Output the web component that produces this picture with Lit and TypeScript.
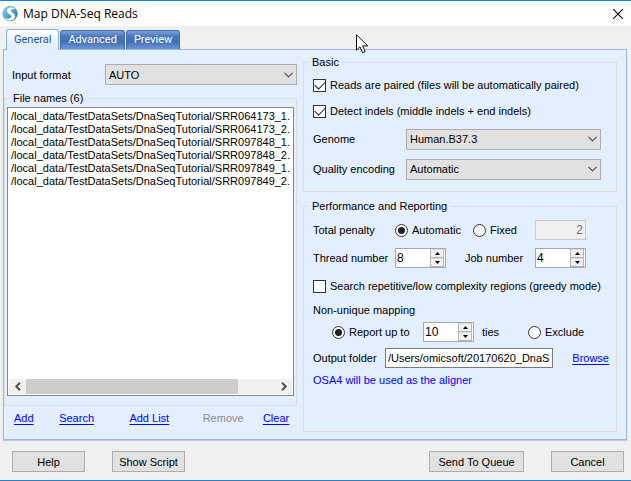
import { LitElement, html, css, svg } from "lit";
import { customElement, property } from "lit/decorators.js";

const base = css`
  * { box-sizing: border-box; }
  input, select, button {
    font: inherit;
    color: inherit;
    margin: 0;
    border-radius: 0;
  }
`;

@customElement("combo-box")
class ComboBox extends LitElement {
  @property() label = "";
  @property() value = "";
  static styles = [base, css`
    :host { display: grid; grid-template-columns: minmax(0, 1fr); height: 21px; }
    .select, .chevron { grid-area: 1 / 1; }
    .select {
      appearance: none;
      width: 100%;
      height: 21px;
      padding: 0 20px 0 3px;
      border: 1px solid #adadad;
      background: #e1e1e1;
    }
    .chevron {
      justify-self: end;
      align-self: center;
      margin-right: 4px;
      pointer-events: none;
    }
  `];
  render() {
    return html`
      <select class="select" aria-label=${this.label}><option>${this.value}</option></select>
      <svg class="chevron" width="9" height="6" viewBox="0 0 9 6" fill="none" stroke="#505050" stroke-width="1.2">
        <path d="M.5 .8 4.5 4.8 8.5 .8" />
      </svg>`;
  }
}

@customElement("number-spinner")
class NumberSpinner extends LitElement {
  @property() label = "";
  @property() value = "";
  static styles = [base, css`
    :host {
      display: flex;
      flex: none;
      box-sizing: border-box;
      width: 51px;
      height: 20px;
      border: 1px solid #a4a7ab;
      background: #fff;
      padding-right: 1px;
    }
    .field {
      flex: 1;
      min-width: 0;
      border: 0;
      padding: 0 0 1px 1px;
      background: none;
      font-size: 12px;
    }
    .buttons { display: grid; grid-template-rows: 1fr 1fr; width: 14px; }
    .step {
      display: grid;
      place-items: center;
      padding: 0;
      border: 1px solid #b4b4b4;
      border-top-color: #d8d8d8;
      background: #f0f0f0;
    }
  `];
  render() {
    return html`
      <input class="field" aria-label=${this.label} .value=${this.value} />
      <span class="buttons">
        <button class="step" aria-label="Increase"><svg width="5" height="3" viewBox="0 0 5 3"><path d="M0 3 2.5 0 5 3z" /></svg></button>
        <button class="step" aria-label="Decrease"><svg width="5" height="3" viewBox="0 0 5 3"><path d="M0 0 2.5 3 5 0z" /></svg></button>
      </span>`;
  }
}

const FILES = ["SRR064173_1", "SRR064173_2", "SRR097848_1", "SRR097848_2", "SRR097849_1", "SRR097849_2"]
  .map((name) => `/local_data/TestDataSets/DnaSeqTutorial/${name}.`);

const arrow = (d: string) => svg`<path d=${d} fill="none" stroke="#505050" stroke-width="2" />`;

@customElement("app-root")
class AppRoot extends LitElement {
  static styles = [base, css`
    :host {
      position: relative;
      display: flex;
      flex-direction: column;
      min-height: 100vh;
      box-sizing: border-box;
      border-top: 1px solid #1883d7;
      border-bottom: 1px solid #1883d7;
      background: #f0f0f0;
      color: #000;
      font: 11px/14px "Liberation Sans", Arial, sans-serif;
    }
    .titlebar {
      display: flex;
      align-items: center;
      height: 25px;
      padding: 0 8px 0 2px;
      background: #fff;
    }
    .logo { margin-right: 5px; }
    .title {
      flex: 1;
      margin: 0;
      font: 12px/16px "Open Sans", "Noto Sans", sans-serif;
    }
    .close { display: grid; padding: 0; border: 0; background: none; }

    .tabs { display: flex; align-items: flex-end; gap: 1px; height: 23px; padding-left: 6px; }
    .tab {
      height: 19px;
      padding: 0 7px 1px;
      border: 1px solid #3c6bb4;
      border-bottom: 0;
      border-radius: 3px 3px 0 0;
      background: linear-gradient(#7ba0d8, #4a78be 30%, #426fb5 60%, #6c98d8);
      color: #fff;
      font: 11px/16px Roboto, "Liberation Sans", sans-serif;
    }
    .tab.selected {
      z-index: 1;
      height: 21px;
      margin-bottom: -1px;
      border-color: #8db2e3;
      background: linear-gradient(#fff, #e3eeff 70%);
      color: #2a57a5;
    }

    .panel {
      flex: 1;
      display: grid;
      grid-template-columns: minmax(0, 293fr) minmax(0, 314fr);
      column-gap: 6px;
      margin: 0 4px 0 3px;
      padding: 0 9px 7px 0;
      border: 1px solid #99b8e8;
      background: #e3eeff;
      box-shadow: 0 1px 1px #c4ccd8;
    }
    .left { display: flex; flex-direction: column; padding-top: 14px; }
    .right { display: flex; flex-direction: column; gap: 7px; padding-top: 5px; }

    .group { min-width: 0; margin: 0; padding: 0 7px 0 9px; border: 1px solid #dcdcdc; }
    .caption { padding: 0 3px; margin-left: -4px; }
    .basic { padding: 3px 7px 7px 9px; }
    .basic .row { padding-right: 8px; }
    .files {
      flex: 1;
      display: flex;
      flex-direction: column;
      margin-top: 6px;
      padding: 2px 2px 9px;
    }
    .files .caption { margin-left: 3px; }
    .report { flex: 1; padding-top: 2px; }

    .row { display: flex; align-items: center; min-height: 30px; }
    .row.tight { min-height: 26px; }
    .row.heading { min-height: 18px; }
    .row.indent { padding-left: 19px; }
    .key { flex: none; width: 93px; }
    .key.short { width: 82px; }
    .key.narrow { width: 72px; }
    .key.next { width: 89px; padding-left: 19px; }
    .key.unit { width: 54px; padding-left: 8px; }
    .grow { flex: 1; min-width: 0; }
    .row.format { min-height: 21px; padding-left: 8px; }

    .option { display: flex; flex: none; align-items: center; gap: 4px; white-space: nowrap; }
    .option.mode { width: 78px; }
    .option.amount { width: 62px; }
    .option.limit { width: 91px; }
    .check, .radio {
      appearance: none;
      flex: none;
      display: grid;
      place-items: center;
      width: 13px;
      height: 13px;
      border: 1px solid #333;
      background: #fff;
    }
    .radio { border-radius: 50%; }
    .radio:checked::before {
      content: "";
      width: 7px;
      height: 7px;
      border-radius: 50%;
      background: #222;
    }
    .check:checked::before {
      content: "";
      width: 9px;
      height: 5px;
      margin-bottom: 3px;
      border: solid #222;
      border-width: 0 0 1px 1px;
      transform: rotate(-45deg);
    }

    .penalty {
      flex: none;
      width: 51px;
      height: 20px;
      padding: 0 2px;
      border: 1px solid #c8c8c8;
      background: #f0f0f0;
      color: #6d6d6d;
      text-align: right;
      font-size: 12px;
    }
    .folder {
      flex: 1;
      min-width: 0;
      height: 20px;
      margin-right: 19px;
      padding: 0 2px;
      border: 1px solid #7a7a7a;
      background: #fff;
    }
    .link { color: #00f; text-decoration: underline; text-underline-offset: 2px; }
    .link.off { color: #8c8c8c; text-decoration: none; }
    .note { color: #00f; }

    .listbox {
      flex: 1;
      display: flex;
      flex-direction: column;
      border: 1px solid #828790;
      background: #fff;
      padding: 1px;
    }
    .list {
      flex: 1;
      margin: 0;
      padding: 1px 2px;
      list-style: none;
      overflow: hidden;
      white-space: nowrap;
      line-height: 13px;
    }
    .scroll {
      display: grid;
      grid-template-columns: 17px minmax(0, 1fr) 17px;
      height: 15px;
      background: #f0f0f0;
    }
    .scroll svg { place-self: center; }
    .thumb { width: 85%; background: #cdcdcd; }

    .actions {
      display: grid;
      grid-template-columns: 45fr 70fr 73fr 60fr 34fr;
      justify-items: start;
      padding: 5px 0 7px 10px;
    }

    .footer { display: flex; gap: 27px; padding: 11px 7px 8px 12px; }
    .button {
      width: 73px;
      height: 21px;
      padding: 0;
      border: 1px solid #adadad;
      background: #e1e1e1;
    }
    .button.wide { width: 95px; margin-left: auto; }
    .pointer { position: absolute; left: 356px; top: 33px; }
  `];

  render() {
    return html`
      <header class="titlebar">
        <svg class="logo" width="16" height="17" viewBox="0 0 16 17">
          <defs>
            <linearGradient id="orb" x1="0" y1="0" x2="1" y2="1">
              <stop offset="0" stop-color="#a5d8e8" /><stop offset=".5" stop-color="#4fa9cc" /><stop offset="1" stop-color="#1b5f8c" />
            </linearGradient>
          </defs>
          <circle cx="8" cy="8.5" r="7.7" fill="url(#orb)" />
          <path d="M13.4 3.8C10.5 1.6 5.4 2.2 5 5.6 4.700 8.900 9.600 9 9.300 11.600 9 13.700 5.800 14.300 2.500 13 6 17.300 12.900 16 13.200 11.500 13.400 7.800 8.600 7.700 8.800 5.800 9 4.200 11 3.500 13.400 3.800z" fill="#fff" />
        </svg>
        <h1 class="title">Map DNA-Seq Reads</h1>
        <button class="close" aria-label="Close">
          <svg width="10" height="10" viewBox="0 0 10 10" stroke="#000" stroke-width="1.1"><path d="M0 0 10 10M10 0 0 10" /></svg>
        </button>
      </header>

      <nav class="tabs" role="tablist">
        <button class="tab selected" role="tab" aria-selected="true">General</button>
        <button class="tab" role="tab">Advanced</button>
        <button class="tab" role="tab">Preview</button>
      </nav>

      <main class="panel">
        <section class="left">
          <div class="row format">
            <span class="key">Input format</span>
            <combo-box class="grow" label="Input format" value="AUTO"></combo-box>
          </div>
          <fieldset class="group files">
            <legend class="caption">File names (6)</legend>
            <div class="listbox">
              <ul class="list" role="listbox" aria-label="File names">
                ${FILES.map((file) => html`<li role="option">${file}</li>`)}
              </ul>
              <div class="scroll">
                <svg width="8" height="9" viewBox="0 0 8 9">${arrow("M6 .8 2.3 4.5 6 8.2")}</svg>
                <div class="thumb"></div>
                <svg width="8" height="9" viewBox="0 0 8 9">${arrow("M2 .8 5.7 4.5 2 8.2")}</svg>
              </div>
            </div>
          </fieldset>
          <div class="actions">
            <a class="link" href="#add">Add</a>
            <a class="link" href="#search">Search</a>
            <a class="link" href="#list">Add List</a>
            <a class="link off" aria-disabled="true">Remove</a>
            <a class="link" href="#clear">Clear</a>
          </div>
        </section>

        <section class="right">
          <fieldset class="group basic">
            <legend class="caption">Basic</legend>
            <div class="row tight">
              <label class="option"><input class="check" type="checkbox" checked />Reads are paired (files will be automatically paired)</label>
            </div>
            <div class="row tight">
              <label class="option"><input class="check" type="checkbox" checked />Detect indels (middle indels + end indels)</label>
            </div>
            <div class="row">
              <span class="key">Genome</span>
              <combo-box class="grow" label="Genome" value="Human.B37.3"></combo-box>
            </div>
            <div class="row">
              <span class="key">Quality encoding</span>
              <combo-box class="grow" label="Quality encoding" value="Automatic"></combo-box>
            </div>
          </fieldset>

          <fieldset class="group report">
            <legend class="caption">Performance and Reporting</legend>
            <div class="row">
              <span class="key short">Total penalty</span>
              <label class="option mode"><input class="radio" type="radio" name="penalty" checked />Automatic</label>
              <label class="option amount"><input class="radio" type="radio" name="penalty" />Fixed</label>
              <input class="penalty" aria-label="Fixed penalty" value="2" disabled />
            </div>
            <div class="row tight">
              <span class="key short">Thread number</span>
              <number-spinner label="Thread number" value="8"></number-spinner>
              <span class="key next">Job number</span>
              <number-spinner label="Job number" value="4"></number-spinner>
            </div>
            <div class="row">
              <label class="option"><input class="check" type="checkbox" />Search repetitive/low complexity regions (greedy mode)</label>
            </div>
            <div class="row heading">Non-unique mapping</div>
            <div class="row tight indent">
              <label class="option limit"><input class="radio" type="radio" name="mapping" checked />Report up to</label>
              <number-spinner label="Maximum ties" value="10"></number-spinner>
              <span class="key unit">ties</span>
              <label class="option"><input class="radio" type="radio" name="mapping" />Exclude</label>
            </div>
            <div class="row tight">
              <label class="key narrow" for="folder">Output folder</label>
              <input class="folder" id="folder" value="/Users/omicsoft/20170620_DnaS" />
              <a class="link" href="#browse">Browse</a>
            </div>
            <div class="row heading note">OSA4 will be used as the aligner</div>
          </fieldset>
        </section>
      </main>

      <footer class="footer">
        <button class="button">Help</button>
        <button class="button">Show Script</button>
        <button class="button wide">Send To Queue</button>
        <button class="button">Cancel</button>
      </footer>

      <svg class="pointer" width="13" height="21" viewBox="0 0 13 21">
        <path d="M.5 .8V16.2L4 12.8 6.6 18.8 9.2 17.7 6.7 11.9H11.8z" fill="#fff" stroke="#111" />
      </svg>`;
  }
}
